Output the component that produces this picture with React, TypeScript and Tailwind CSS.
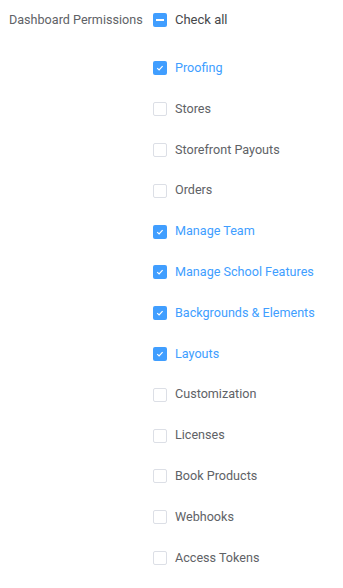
import React from "react";

const items: { label: string; checked: boolean }[] = [
  { label: "Proofing", checked: true },
  { label: "Stores", checked: false },
  { label: "Storefront Payouts", checked: false },
  { label: "Orders", checked: false },
  { label: "Manage Team", checked: true },
  { label: "Manage School Features", checked: true },
  { label: "Backgrounds & Elements", checked: true },
  { label: "Layouts", checked: true },
  { label: "Customization", checked: false },
  { label: "Licenses", checked: false },
  { label: "Book Products", checked: false },
  { label: "Webhooks", checked: false },
  { label: "Access Tokens", checked: false },
];

function Box({ state }: { state: "on" | "off" | "mixed" }) {
  if (state === "off") {
    return <span className="block w-[14px] h-[14px] rounded-[2px] border border-[#dcdfe6] bg-white" />;
  }
  return (
    <span className="flex w-[14px] h-[14px] rounded-[2px] bg-[#409eff] items-center justify-center">
      {state === "on" ? (
        <svg width="14" height="14" viewBox="0 0 14 14">
          <path d="M4.2 7.1 L6.1 8.9 L9.6 5.2" fill="none" stroke="#fff" strokeWidth="1.2" />
        </svg>
      ) : (
        <span className="block w-[8px] h-[2px] bg-white" />
      )}
    </span>
  );
}

export default function App() {
  return (
    <div className="w-[343px] h-[588px] bg-white flex text-[12.6px]" style={{ fontFamily: "Roboto, 'Liberation Sans', sans-serif" }}>
      <div className="w-[153px] pl-[9px] pt-[11px] text-[#606266] leading-[18px] whitespace-nowrap">Dashboard Permissions</div>
      <div className="flex flex-col pt-[1px]">
        <div className="h-[38px] flex items-center">
          <Box state="mixed" />
          <span className="pl-[8px] text-[#45474b] text-[13px]">Check all</span>
        </div>
        <div className="pt-[9px] flex flex-col">
          {items.map((it) => (
            <div key={it.label} className="h-[40.8px] flex items-center">
              <Box state={it.checked ? "on" : "off"} />
              <span className={"pl-[8px] " + (it.checked ? "text-[#409eff]" : "text-[#606266]")}>{it.label}</span>
            </div>
          ))}
        </div>
      </div>
    </div>
  );
}
